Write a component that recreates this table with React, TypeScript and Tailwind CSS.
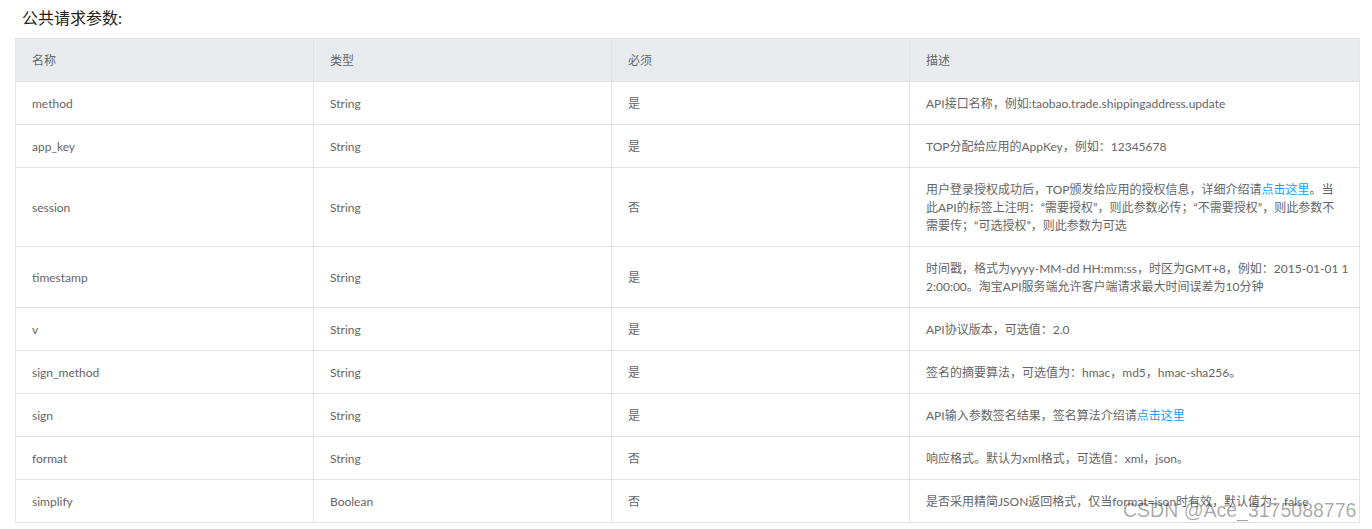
import React from "react";

const font = 'Lato, "Noto Sans CJK SC", sans-serif';

const Link = ({ children }: { children: React.ReactNode }) => (
  <a className="text-[#1a9bfc] cursor-pointer">{children}</a>
);

const rows: { name: string; type: string; req: string; desc: React.ReactNode; tight?: boolean }[] = [
  { name: "method", type: "String", req: "是", desc: "API接口名称，例如:taobao.trade.shippingaddress.update" },
  { name: "app_key", type: "String", req: "是", desc: "TOP分配给应用的AppKey，例如：12345678" },
  {
    name: "session",
    type: "String",
    req: "否",
    desc: (
      <>
        用户登录授权成功后，TOP颁发给应用的授权信息，详细介绍请<Link>点击这里</Link>。当此API的标签上注明：“需要授权”，则此参数必传；“不需要授权”，则此参数不需要传；“可选授权”，则此参数为可选
      </>
    ),
  },
  {
    name: "timestamp",
    type: "String",
    req: "是",
    tight: true,
    desc: (
      <>
        时间戳，格式为yyyy-MM-dd HH:mm:ss，时区为GMT+8，例如：2015-01-01 1
        <br />
        2:00:00。淘宝API服务端允许客户端请求最大时间误差为10分钟
      </>
    ),
  },
  { name: "v", type: "String", req: "是", desc: "API协议版本，可选值：2.0" },
  { name: "sign_method", type: "String", req: "是", desc: "签名的摘要算法，可选值为：hmac，md5，hmac-sha256。" },
  {
    name: "sign",
    type: "String",
    req: "是",
    desc: (
      <>
        API输入参数签名结果，签名算法介绍请<Link>点击这里</Link>
      </>
    ),
  },
  { name: "format", type: "String", req: "否", desc: "响应格式。默认为xml格式，可选值：xml，json。" },
  { name: "simplify", type: "Boolean", req: "否", desc: "是否采用精简JSON返回格式，仅当format=json时有效，默认值为：false" },
];

export default function App() {
  return (
    <div className="relative bg-white w-[1372px] h-[529px] overflow-hidden" style={{ fontFamily: font }}>
      <div className="h-[38px] pl-[22px] pt-[7px] text-[16px] leading-[22px] text-[#222]">公共请求参数:</div>
      <table className="ml-[15px] w-[1344px] table-fixed border-collapse text-[12px] leading-[18px] text-[#666]">
        <colgroup>
          <col className="w-[298px]" />
          <col className="w-[298px]" />
          <col className="w-[298px]" />
          <col className="w-[450px]" />
        </colgroup>
        <thead>
          <tr className="bg-[#e9ecef]">
            {["名称", "类型", "必须", "描述"].map((h) => (
              <th key={h} className="border border-[#e3e3e3] px-4 pt-[13px] pb-[11px] text-left font-normal">
                {h}
              </th>
            ))}
          </tr>
        </thead>
        <tbody>
          {rows.map((r) => (
            <tr key={r.name}>
              <td className="border border-[#e3e3e3] px-4 pt-[13px] pb-[11px]">{r.name}</td>
              <td className="border border-[#e3e3e3] px-4 pt-[13px] pb-[11px]">{r.type}</td>
              <td className="border border-[#e3e3e3] px-4 pt-[13px] pb-[11px]">{r.req}</td>
              <td
                className={
                  r.tight
                    ? "border border-[#e3e3e3] pl-4 pr-[4px] pt-[13px] pb-[11px] whitespace-nowrap"
                    : "border border-[#e3e3e3] pl-4 pr-[20px] pt-[13px] pb-[11px] break-all"
                }
              >
                {r.desc}
              </td>
            </tr>
          ))}
        </tbody>
      </table>
      <div
        className="absolute left-[1123px] top-[498px] text-[19.5px] leading-[24px] text-[#000]/35 whitespace-nowrap"
        style={{ fontFamily: '"Liberation Sans", Arial, sans-serif' }}
      >
        CSDN @Ace_3175088776
      </div>
    </div>
  );
}
